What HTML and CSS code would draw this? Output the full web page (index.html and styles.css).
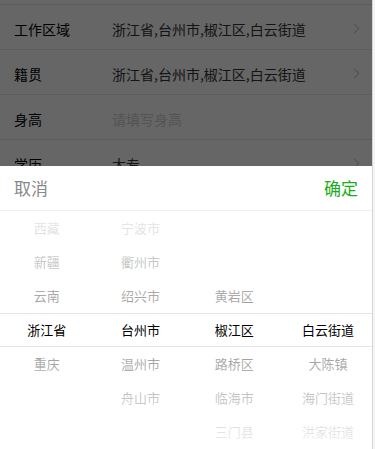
FILE: index.html
```html
<!DOCTYPE html>
<html lang="zh-CN">
<head>
    <meta charset="UTF-8">
    <meta name="viewport" content="width=device-width, initial-scale=1.0">
    <title>个人资料</title>
    <link rel="stylesheet" href="styles.css">
</head>
<body>
    <div class="form">
        <div class="cell">
            <span class="cell-label">工作区域</span>
            <span class="cell-value">浙江省,台州市,椒江区,白云街道</span>
            <i class="cell-arrow"></i>
        </div>
        <div class="cell">
            <span class="cell-label">籍贯</span>
            <span class="cell-value">浙江省,台州市,椒江区,白云街道</span>
            <i class="cell-arrow"></i>
        </div>
        <div class="cell">
            <span class="cell-label">身高</span>
            <span class="cell-value placeholder">请填写身高</span>
        </div>
        <div class="cell">
            <span class="cell-label">学历</span>
            <span class="cell-value">大专</span>
            <i class="cell-arrow"></i>
        </div>
        <div class="cell">
            <span class="cell-label">婚姻状况</span>
            <span class="cell-value">未婚</span>
            <i class="cell-arrow"></i>
        </div>
    </div>

    <!-- 弹出层 -->
    <div class="mask"></div>

    <div class="picker">
        <div class="picker-hd">
            <a class="picker-action cancel">取消</a>
            <a class="picker-action confirm">确定</a>
        </div>
        <div class="picker-bd">
            <div class="picker-group">
                <div class="picker-item">西藏</div>
                <div class="picker-item">新疆</div>
                <div class="picker-item">云南</div>
                <div class="picker-item">浙江省</div>
                <div class="picker-item">重庆</div>
            </div>
            <div class="picker-group">
                <div class="picker-item">宁波市</div>
                <div class="picker-item">衢州市</div>
                <div class="picker-item">绍兴市</div>
                <div class="picker-item">台州市</div>
                <div class="picker-item">温州市</div>
                <div class="picker-item">舟山市</div>
            </div>
            <div class="picker-group offset-2">
                <div class="picker-item">黄岩区</div>
                <div class="picker-item">椒江区</div>
                <div class="picker-item">路桥区</div>
                <div class="picker-item">临海市</div>
                <div class="picker-item">三门县</div>
            </div>
            <div class="picker-group offset-3">
                <div class="picker-item">白云街道</div>
                <div class="picker-item">大陈镇</div>
                <div class="picker-item">海门街道</div>
                <div class="picker-item">洪家街道</div>
            </div>
            <div class="picker-mask"></div>
            <div class="picker-indicator"></div>
        </div>
    </div>

    <div class="scroll-edge"></div>
</body>
</html>
```

FILE: styles.css
```css
* {
    box-sizing: border-box;
    margin: 0;
    padding: 0;
}

body {
    font-family: 'Noto Sans CJK SC', 'Noto Sans', sans-serif;
    background: #fff;
    color: #000;
    overflow: hidden;
}

.form {
    margin-top: 4px;
    border-top: 1px solid #e5e5e5;
}

.cell {
    display: flex;
    align-items: center;
    height: 45px;
    padding: 3px 15px 0 14px;
    border-bottom: 1px solid #e5e5e5;
    font-size: 14px;
    line-height: 24px;
}

.cell-label {
    width: 98px;
    flex-shrink: 0;
}

.cell-value {
    flex: 1;
    color: #333;
}

.cell-value.placeholder {
    color: #d0d0d0;
}

.cell-arrow {
    width: 7px;
    height: 7px;
    border-top: 1.5px solid #c8c8cd;
    border-right: 1.5px solid #c8c8cd;
    transform: rotate(45deg);
    margin-right: 2px;
}

.mask {
    position: fixed;
    top: 0;
    left: 0;
    right: 0;
    bottom: 0;
    background: rgba(0, 0, 0, 0.6);
}

.picker {
    position: fixed;
    left: 0;
    right: 0;
    bottom: 0;
    background: #fff;
}

.picker-hd {
    display: flex;
    padding: 10px 17px 10px 14px;
    font-size: 17px;
    line-height: 24px;
    border-bottom: 1px solid #efefef;
}

.picker-action {
    flex: 1;
}

.picker-action.cancel {
    color: #888;
}

.picker-action.confirm {
    color: #1aad19;
    text-align: right;
}

.picker-bd {
    position: relative;
    display: flex;
    height: 238px;
    overflow: hidden;
}

.picker-group {
    flex: 1;
}

.picker-group.offset-2 {
    padding-top: 68px;
}

.picker-group.offset-3 {
    padding-top: 102px;
}

.picker-item {
    height: 34px;
    line-height: 34px;
    padding: 0 6px;
    text-align: center;
    font-size: 13px;
    color: #000;
    white-space: nowrap;
}

.picker-mask {
    position: absolute;
    top: 0;
    left: 0;
    right: 0;
    bottom: 0;
    background-image:
        linear-gradient(180deg, rgba(255, 255, 255, 0.95), rgba(255, 255, 255, 0.6)),
        linear-gradient(0deg, rgba(255, 255, 255, 0.95), rgba(255, 255, 255, 0.6));
    background-position: top, bottom;
    background-size: 100% 102px;
    background-repeat: no-repeat;
}

.picker-indicator {
    position: absolute;
    top: 102px;
    left: 0;
    right: 0;
    height: 34px;
    border-top: 1px solid #e5e5e5;
    border-bottom: 1px solid #e5e5e5;
}

.scroll-edge {
    position: fixed;
    top: 0;
    right: 0;
    bottom: 0;
    width: 3px;
    background: #f4f4f4;
    border-left: 1px solid #d6d6d6;
}
```
